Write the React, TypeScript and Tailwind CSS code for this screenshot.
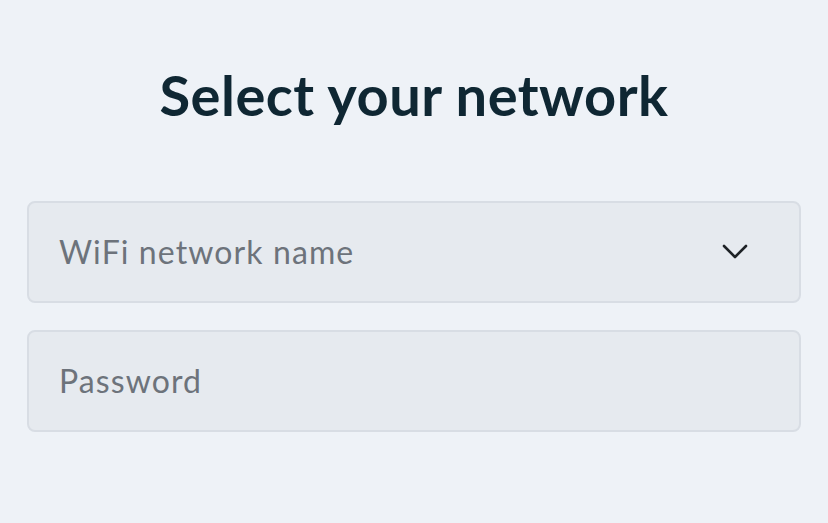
export default function App() {
  return (
    <div
      className="min-h-[523px] w-full bg-[#eef2f7] px-[27px] pt-[64px]"
      style={{ fontFamily: "Lato, 'Open Sans', sans-serif" }}
    >
      <h1 className="text-center text-[56px] font-bold leading-[62px] tracking-[0.5px] text-[#0f2733]">
        Select your network
      </h1>

      <form className="mt-[75px] flex flex-col gap-[27px]">
        <div className="flex h-[102px] items-center justify-between rounded-[8px] border-2 border-[#d8dde4] bg-[#e6eaef] pl-[30px] pr-[50px]">
          <span className="text-[32px] tracking-[1.1px] text-[#6d737b]">
            WiFi network name
          </span>
          {/* chevron */}
          <svg
            width="28"
            height="18"
            viewBox="0 0 28 18"
            fill="none"
            stroke="#1e2226"
            strokeWidth="2.6"
            strokeLinecap="round"
            strokeLinejoin="round"
          >
            <path d="M3 3 L14 14 L25 3" />
          </svg>
        </div>
        <div className="flex h-[102px] items-center rounded-[8px] border-2 border-[#d8dde4] bg-[#e6eaef] pl-[30px]">
          <input
            type="password"
            placeholder="Password"
            className="w-full bg-transparent text-[32px] tracking-[1.1px] text-[#6d737b] outline-none placeholder:text-[#6d737b]"
          />
        </div>
      </form>
    </div>
  );
}
